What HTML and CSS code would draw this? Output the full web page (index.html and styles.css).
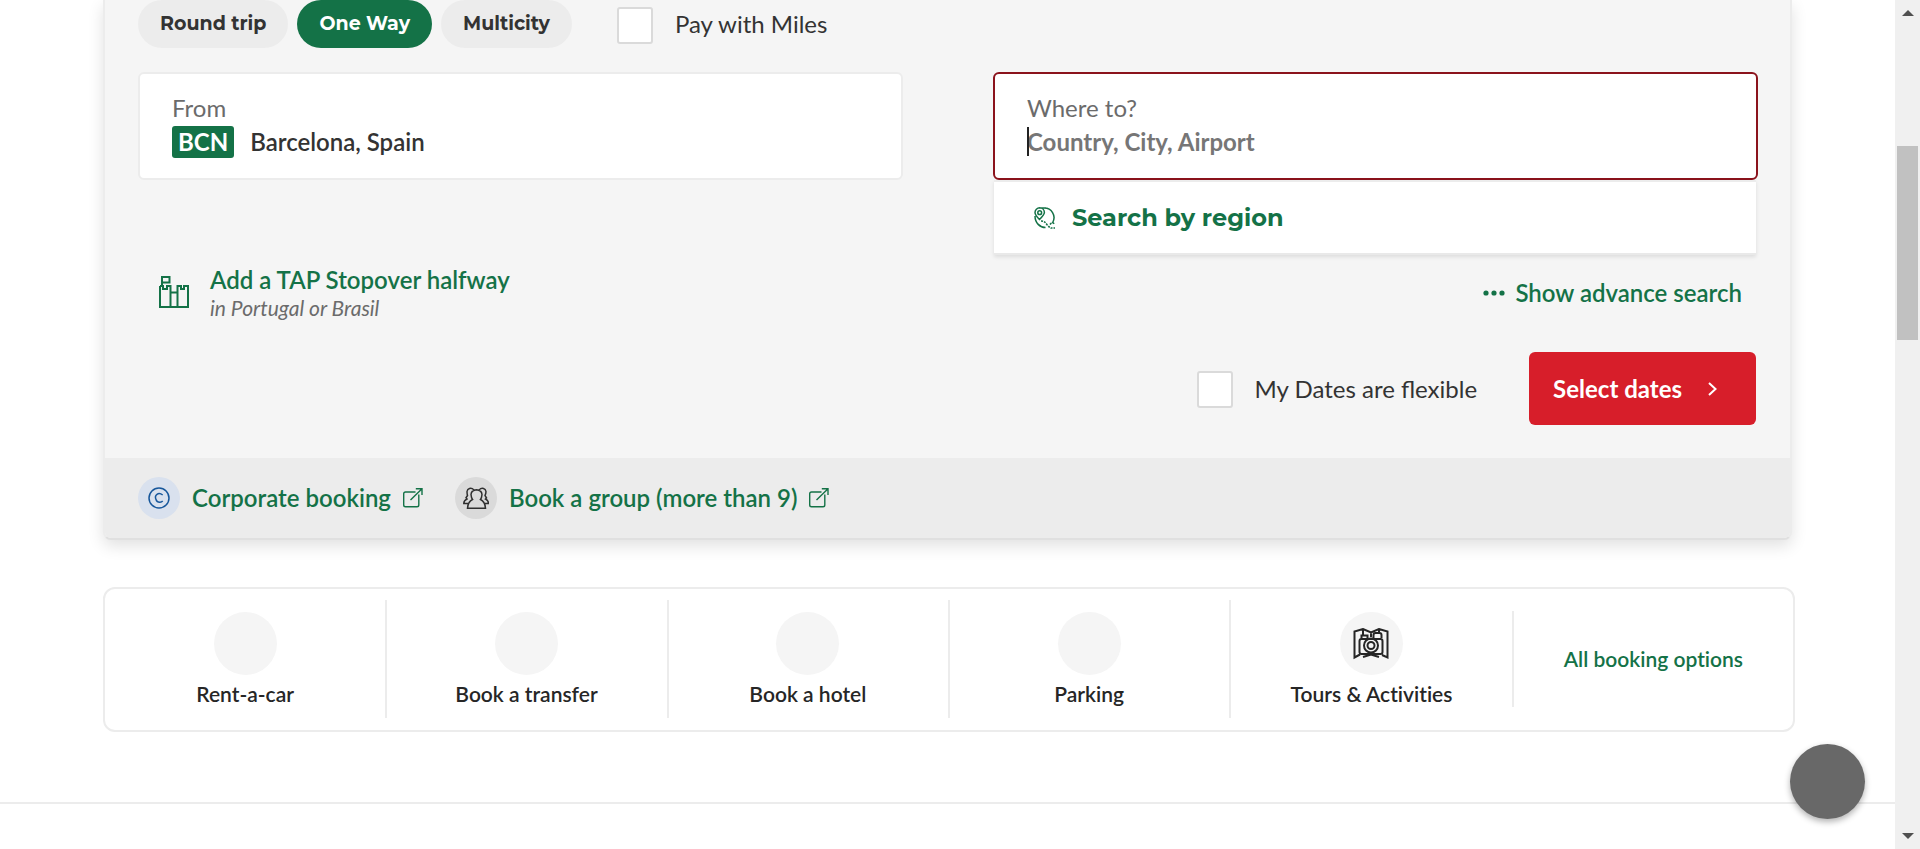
FILE: index.html
```html
<!DOCTYPE html>
<html lang="en">
<head>
<meta charset="utf-8">
<title>Book a flight</title>
<link rel="stylesheet" href="styles.css">
</head>
<body>
<svg class="defs" aria-hidden="true">
  <symbol id="external" viewBox="0 0 20 20"><path d="M12.500 4H2.500Q.7 4 .7 5.800V17Q.7 18.800 2.500 18.800H14Q15.800 18.800 15.800 17V6.500M7.500 12 19 .8M12.800.8H19V7"/></symbol>
</svg>
<div class="window">
  <main class="page">
    <form class="booking">
      <div class="search">
        <div class="trip">
          <div class="tabs">
            <button type="button" class="tab">Round trip</button>
            <button type="button" class="tab tab-active">One Way</button>
            <button type="button" class="tab">Multicity</button>
          </div>
          <label class="check"><input class="box" type="checkbox">Pay with Miles</label>
        </div>
        <div class="fields">
          <div class="field">
            <label class="field-label" for="from">From</label>
            <div class="field-value"><span class="code">BCN</span><input id="from" class="text" type="text" value="Barcelona, Spain"></div>
          </div>
          <div class="field field-focus">
            <label class="field-label" for="to">Where to?</label>
            <div class="field-value"><input id="to" class="text" type="text" placeholder="Country, City, Airport"><span class="caret"></span></div>
            <div class="menu">
              <button type="button" class="region">
                <svg class="region-icon" viewBox="0 0 22 22"><path d="M1 9C1 16 6 20.500 11.500 20.500M8.500 1.200C18 0 22.500 9 18.500 16M5.500 12.500C2.500 9.500 1 7.500 1 5.500a4.700 4.700 0 0 1 9.400 0C10.400 7.500 8.500 9.500 5.500 12.500ZM5.500 1H12"/><circle cx="5.700" cy="5.700" r="1.900"/><path class="dots" d="M7 14Q10.500 14 12.500 17T17 21H21M16 17.500Q18 14.500 20.500 17"/></svg>
                Search by region
              </button>
            </div>
          </div>
        </div>
        <div class="extras">
          <button type="button" class="stopover">
            <svg class="castle" viewBox="0 0 30 32"><path d="M1 10V31H29V10H25V13H22V10H18.500V31M1 10H4V13H8V10H11.500V31M3 10V1H10.500V6.500H3M11.500 16.500H18.500"/></svg>
            <span class="stopover-text"><span class="stopover-title">Add a TAP Stopover halfway</span><em class="stopover-note">in Portugal or Brasil</em></span>
          </button>
          <button type="button" class="advanced">
            <svg class="ellipsis" viewBox="0 0 22 6"><circle cx="3" cy="3" r="2.600"/><circle cx="11" cy="3" r="2.600"/><circle cx="19" cy="3" r="2.600"/></svg>
            Show advance search
          </button>
        </div>
        <div class="actions">
          <label class="check"><input class="box" type="checkbox">My Dates are flexible</label>
          <button type="submit" class="submit">Select dates
            <svg class="chevron" viewBox="0 0 9 14"><path d="M1 1 7.500 7 1 13"/></svg>
          </button>
        </div>
      </div>
      <div class="links">
        <a class="link" href="#corporate">
          <span class="badge badge-blue"><svg class="copyright" viewBox="0 0 22 22"><circle cx="11" cy="11" r="10"/><path d="M14.700 8Q11.500 5.500 9 7.300T8 12.500Q9 15.500 12 15.300 13.700 15.200 14.700 14"/></svg></span>
          Corporate booking
          <svg class="external"><use href="#external"/></svg>
        </a>
        <a class="link" href="#group">
          <span class="badge"><svg class="group" viewBox="0 0 26 22"><path d="M4.500 21.200H22.500Q22 14.500 17.500 12.500 18.700 11 19 7.500 18.700 3.200 13.500 2.800 8.300 3.200 8 7.500 8.300 11 9.500 12.500 5 14.500 4.500 21.200ZM11 3C8 0 4.500 1.500 4 4.500Q4 6.500 4.500 8.500L3 10.800 4 12Q.8 13.500.8 16.500H5M16 3C19 0 22.500 1.500 23 4.500Q23 6.500 22 8.500L23.500 11 22.500 12Q25.500 13.500 25.500 16.500H21.500"/></svg></span>
          Book a group (more than 9)
          <svg class="external"><use href="#external"/></svg>
        </a>
      </div>
    </form>

    <nav class="services">
      <a class="service" href="#car"><span class="disc"></span>Rent-a-car</a>
      <a class="service" href="#transfer"><span class="disc"></span>Book a transfer</a>
      <a class="service" href="#hotel"><span class="disc"></span>Book a hotel</a>
      <a class="service" href="#parking"><span class="disc"></span>Parking</a>
      <a class="service" href="#tours"><span class="disc"><svg class="tours" viewBox="0 0 36 32"><path d="M7 26.500 1.500 29.500V3.500L10 1 18 4.500 26 1 34.500 3.500V29.500L29 27M10 29 18 26.500 26 29M10 1V8M18 4.500V9M26 1V4M8.500 11H27.500Q29.500 11 29.500 13V24Q29.500 26 27.500 26H8.500Q6.500 26 6.500 24V13Q6.500 11 8.500 11ZM8.500 11V7.500H14.500V11M20.500 10V7Q20.500 5 22.500 5H26.500Q28.500 5 28.500 7V10"/><circle cx="18" cy="17.500" r="7"/><circle cx="18" cy="17.500" r="3.500"/></svg></span>Tours &amp; Activities</a>
      <a class="all" href="#all">All booking options</a>
    </nav>
    <hr class="rule">
    <button type="button" class="bubble" aria-label="Open chat"></button>
  </main>
  <div class="scroll" aria-hidden="true">
    <svg class="arrow" viewBox="0 0 12 6"><path d="M0 6 6 0 12 6Z"/></svg>
    <div class="track"><div class="thumb"></div></div>
    <svg class="arrow" viewBox="0 0 12 6"><path d="M0 0 6 6 12 0Z"/></svg>
  </div>
</div>
</body>
</html>
```
FILE: styles.css
```css
* { box-sizing: border-box; }
body {
  margin: 0;
  font-family: Lato, sans-serif;
  font-size: 24px;
  line-height: 32px;
  color: #333;
  background: #fff;
}
button, input { font: inherit; color: inherit; }
button { border: 0; padding: 0; background: none; cursor: pointer; }
a { color: inherit; text-decoration: none; }
svg { flex: none; fill: none; stroke: currentColor; }
.defs { position: absolute; width: 0; height: 0; }
.window { display: flex; height: 100vh; overflow: hidden; }
.page { flex: 1; min-width: 0; }

/* Booking card */
.booking {
  margin: 0 103px;
  border: 2px solid #ececec;
  border-top: 0;
  border-bottom-color: #e0e0e0;
  border-radius: 0 0 8px 8px;
  background: #f5f5f5;
  box-shadow: 0 6px 16px rgba(0, 0, 0, .12);
}
.search { padding: 0 32px 0 33px; }
.trip { display: flex; align-items: center; gap: 45px; height: 48px; }
.tabs { display: flex; gap: 9px; }
.tab {
  height: 48px;
  padding: 0 22px;
  border-radius: 24px;
  background: #ececec;
  font-family: Montserrat, Inter, sans-serif;
  font-size: 19px;
  font-weight: 700;
}
.tab-active { background: #147247; color: #fff; }
.check { display: flex; align-items: center; gap: 22px; }
.box {
  appearance: none;
  width: 36px;
  height: 37px;
  margin: 2px 0 0;
  border: 2px solid #dadada;
  border-radius: 3px;
  background: #fff;
}
.fields {
  display: grid;
  grid-template-columns: 1fr 1fr;
  gap: 90px;
  margin-top: 24px;
}
.field {
  position: relative;
  height: 108px;
  padding: 18px 32px 0;
  border: 2px solid #ececec;
  border-radius: 6px;
  background: #fff;
}
.field-focus { border-color: #8b131c; }
.field-label { display: block; color: #6b6b6b; }
.field-value { position: relative; display: flex; align-items: center; gap: 16px; height: 35px; }
.code {
  padding: 0 6px;
  border-radius: 3px;
  background: #147247;
  color: #fff;
  font-weight: 700;
}
.text {
  flex: 1;
  min-width: 0;
  padding: 0;
  border: 0;
  outline: 0;
  background: none;
  font-weight: 600;
}
.text::placeholder { color: #767676; opacity: 1; font-weight: 700; }
.caret { position: absolute; left: 0; top: 3px; width: 2px; height: 29px; background: #222; }
.menu {
  position: absolute;
  top: 106px;
  left: -1px;
  right: 0;
  border-top: 2px solid #ececec;
  border-bottom: 2px solid #e9e9e9;
  background: #fff;
  box-shadow: 0 2px 4px rgba(0, 0, 0, .1);
}
.region {
  display: flex;
  align-items: center;
  gap: 16px;
  width: 100%;
  height: 71px;
  padding-left: 40px;
  color: #147247;
  font-family: Montserrat, Inter, sans-serif;
  font-weight: 700;
}
.region-icon { width: 22px; height: 22px; stroke-width: 1.5; }
.dots { stroke-dasharray: 2 1; }
.extras {
  display: flex;
  align-items: center;
  justify-content: space-between;
  margin-top: 84px;
  padding: 0 16px 0 21px;
  color: #147247;
}
.stopover { display: flex; align-items: center; gap: 21px; text-align: left; font-weight: 600; }
.castle { width: 30px; height: 32px; stroke-width: 2; }
.stopover-text { display: flex; flex-direction: column; }
.stopover-title { line-height: 32px; }
.stopover-note { font-size: 21px; line-height: 24px; font-weight: 400; color: #6b6b6b; }
.advanced { display: flex; align-items: center; gap: 10px; padding-top: 2px; font-weight: 600; }
.ellipsis { width: 22px; height: 6px; fill: currentColor; stroke: none; }
.actions {
  display: flex;
  align-items: center;
  justify-content: flex-end;
  gap: 52px;
  padding: 32px 2px 33px 0;
}
.submit {
  display: flex;
  align-items: center;
  gap: 26px;
  height: 73px;
  padding: 0 39px 0 24px;
  border-radius: 6px;
  background: #d71e2a;
  color: #fff;
  font-weight: 700;
}
.chevron { width: 9px; height: 14px; stroke-width: 2; }
.links {
  display: flex;
  align-items: center;
  gap: 32px;
  height: 80px;
  padding: 0 33px;
  border-radius: 0 0 6px 6px;
  background: #ececec;
}
.link { display: flex; align-items: center; gap: 12px; color: #147247; font-weight: 600; }
.badge {
  display: grid;
  place-items: center;
  width: 42px;
  height: 42px;
  border-radius: 50%;
  background: #dadada;
  color: #2f2f2f;
}
.badge-blue { background: #d9e1ee; color: #17579b; }
.copyright { width: 22px; height: 22px; stroke-width: 1.5; }
.group { width: 26px; height: 22px; stroke-width: 1.5; }
.external { width: 20px; height: 20px; stroke-width: 1.4; }

/* Extra services */
.services {
  display: grid;
  grid-template-columns: repeat(6, 1fr);
  align-items: center;
  margin: 47px 100px 0 103px;
  padding: 11px 0 12px;
  border: 2px solid #ececec;
  border-radius: 12px;
  font-size: 21px;
  line-height: 28px;
  font-weight: 600;
  font-variant-ligatures: none;
  color: #262626;
}
.service {
  display: flex;
  flex-direction: column;
  align-items: center;
  gap: 5px;
  height: 118px;
  margin-right: -1px;
  padding-top: 12px;
  border-right: 2px solid #ececec;
}
.service:nth-child(5) { border-right: 0; }
.all {
  display: grid;
  place-items: center;
  height: 96px;
  border-left: 2px solid #ececec;
  color: #147247;
}
.disc { display: grid; place-items: center; width: 63px; height: 63px; border-radius: 50%; background: #f5f5f5; }
.tours { width: 36px; height: 32px; stroke-width: 2; }
.rule { height: 2px; margin: 70px 0 0; border: 0; background: #ececec; }
.bubble {
  position: fixed;
  right: 55px;
  bottom: 30px;
  width: 75px;
  height: 75px;
  border-radius: 50%;
  background: #686868;
  box-shadow: 0 3px 6px rgba(0, 0, 0, .3);
}

/* Scroll bar */
.scroll {
  display: flex;
  flex-direction: column;
  align-items: center;
  gap: 10px;
  width: 25px;
  padding: 10px 0;
  background: #f0f0f0;
}
.arrow { width: 12px; height: 6px; fill: #505050; stroke: none; }
.track { flex: 1; display: grid; grid-template-rows: 120fr 194fr 483fr; }
.thumb { grid-row: 2; width: 21px; background: #c1c1c1; }
```
